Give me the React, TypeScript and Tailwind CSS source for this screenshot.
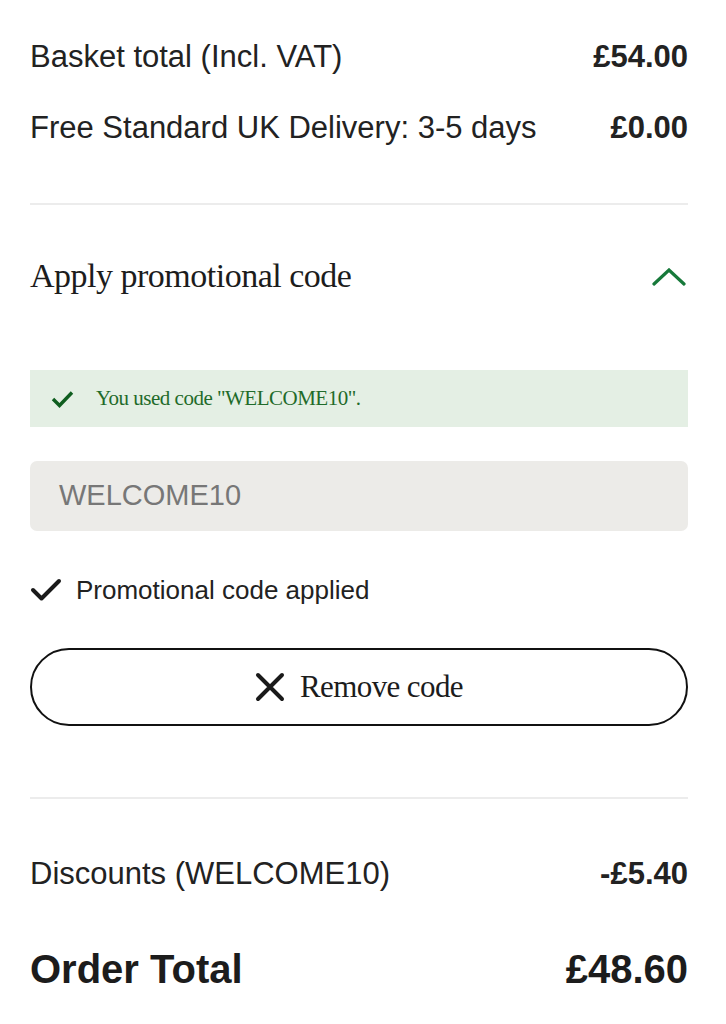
const sans = { fontFamily: '"Liberation Sans", Arial, sans-serif' };
const serif = { fontFamily: '"Liberation Serif", "Times New Roman", serif' };

function Row({ label, value }: { label: string; value: string }) {
  return (
    <div className="flex items-center justify-between text-[31px] leading-[36px] text-[#222]" style={sans}>
      <span>{label}</span>
      <span className="font-bold">{value}</span>
    </div>
  );
}

export default function App() {
  return (
    <div className="w-[726px] bg-white pl-[30px] pr-[38px] pt-[39px] pb-[30px]">
      {/* Totals */}
      <div className="flex flex-col gap-[35px] pb-[57px]">
        <Row label="Basket total (Incl. VAT)" value="£54.00" />
        <Row label="Free Standard UK Delivery: 3-5 days" value="£0.00" />
      </div>

      <div className="h-[2px] bg-[#ececec]" />

      {/* Promo section */}
      <div className="pt-[51px] pb-[71px]">
        <div className="flex h-[40px] items-center justify-between">
          <span className="text-[34px] leading-[40px] text-[#1c1c1c] tracking-[-0.5px]" style={serif}>
            Apply promotional code
          </span>
          <svg width="34" height="18" viewBox="0 0 34 18" className="mr-[2px] mt-[2px]">
            <path d="M2 16 L17 2 L32 16" fill="none" stroke="#17793a" strokeWidth="3.2" strokeLinecap="round" />
          </svg>
        </div>

        <div className="mt-[74px] flex h-[57px] items-center bg-[#e4efe4] pl-[21px]">
          <svg width="23" height="18" viewBox="0 0 23 18">
            <path d="M2 9 L8.5 15.5 L21 2.5" fill="none" stroke="#0f5e1f" strokeWidth="3.4" />
          </svg>
          <span className="ml-[22px] text-[21px] text-[#1f6b2a] tracking-[-0.5px]" style={serif}>
            You used code "WELCOME10".
          </span>
        </div>

        <div className="mt-[34px] flex h-[70px] items-center rounded-[7px] bg-[#ecebe8] pl-[29px] text-[29px] text-[#777]" style={sans}>
          WELCOME10
        </div>

        <div className="mt-[42px] flex h-[34px] items-center text-[26px] text-[#222]" style={sans}>
          <svg width="32" height="24" viewBox="0 0 32 24">
            <path d="M3 12 L11.5 20.5 L29 3" fill="none" stroke="#1a1a1a" strokeWidth="4" strokeLinecap="round" strokeLinejoin="round" />
          </svg>
          <span className="ml-[14px]">Promotional code applied</span>
        </div>

        <button className="mt-[41px] flex h-[78px] w-full items-center justify-center gap-[15px] rounded-full border-[2px] border-[#111] bg-white">
          <svg width="30" height="30" viewBox="0 0 30 30">
            <path d="M3 3 L27 27 M27 3 L3 27" fill="none" stroke="#1a1a1a" strokeWidth="4" strokeLinecap="round" />
          </svg>
          <span className="text-[31px] leading-[36px] text-[#1c1c1c] tracking-[-0.6px]" style={serif}>
            Remove code
          </span>
        </button>
      </div>

      <div className="h-[2px] bg-[#ececec]" />

      {/* Discounts and total */}
      <div className="pt-[57px]">
        <Row label="Discounts (WELCOME10)" value="-£5.40" />
        <div className="mt-[55px] flex items-center justify-between text-[40px] leading-[44px] font-bold text-[#1c1c1c]" style={sans}>
          <span>Order Total</span>
          <span>£48.60</span>
        </div>
      </div>
    </div>
  );
}
